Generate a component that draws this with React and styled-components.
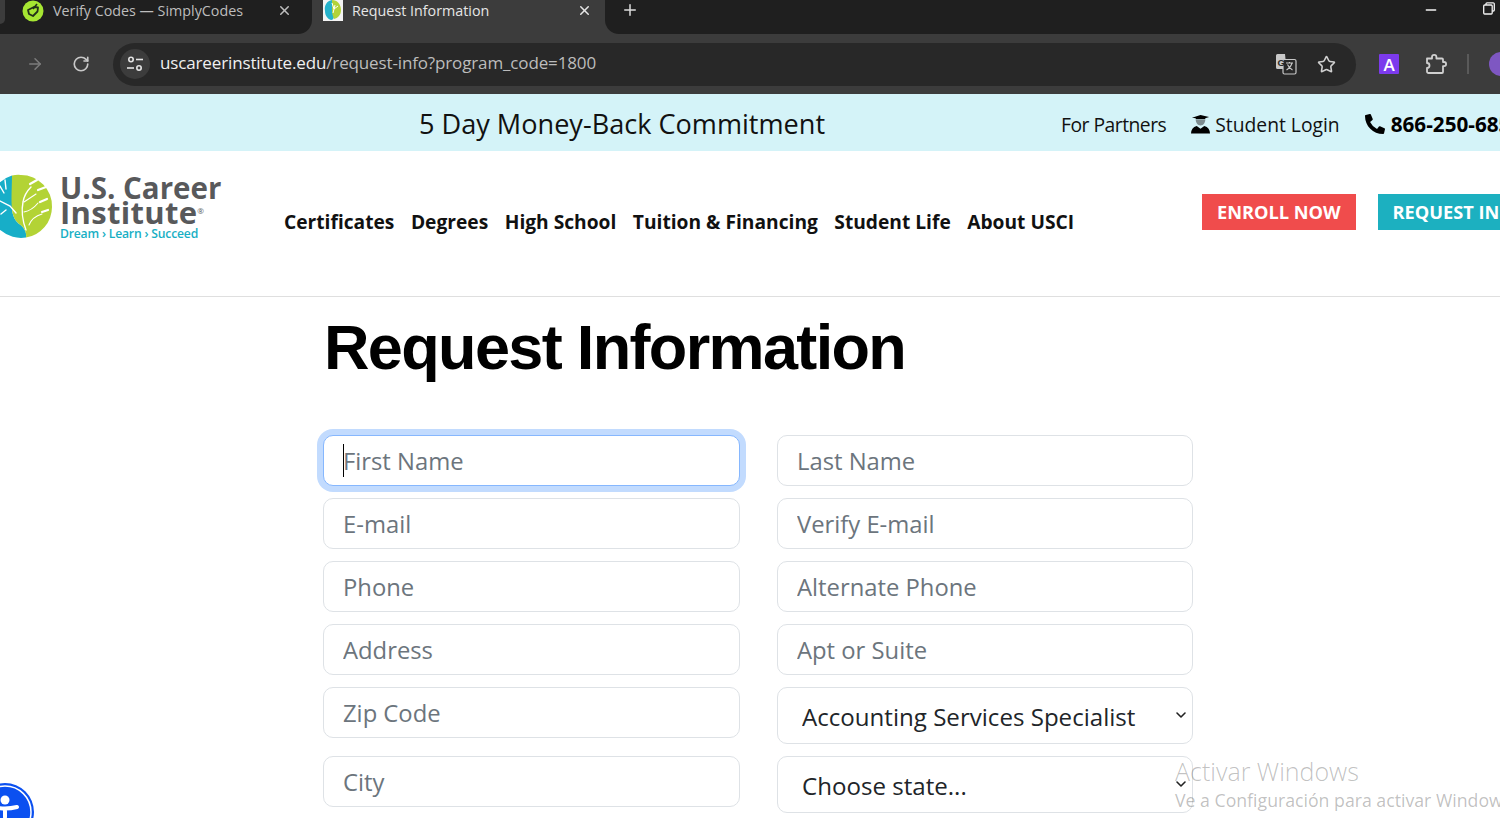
import styled, { createGlobalStyle } from 'styled-components';
import { ArrowRight, ChevronDown, RotateCw, Star, X, Plus, Minus } from 'lucide-react';
import { FaPhoneAlt } from 'react-icons/fa';

const GlobalStyle = createGlobalStyle`
  html, body {
    margin: 0;
    padding: 0;
    height: 818px;
    overflow: hidden;
    background: #fff;
    font-family: 'Open Sans', 'Noto Sans', sans-serif;
  }
  * { box-sizing: border-box; }
`;

const Page = styled.div`
  position: relative;
  width: 1500px;
  height: 818px;
  overflow: hidden;
`;

/* browser chrome */
const TabStrip = styled.div`
  display: flex;
  height: 34px;
  background: #3c3c3c;
  color: #fff;
`;

const DarkBlock = styled.div`
  display: flex;
  align-items: flex-start;
  background: #1f1f1f;
  flex: ${(p) => (p.$grow ? '1' : '0 0 312px')};
  border-radius: ${(p) => (p.$grow ? '0 0 0 14px' : '0 0 14px 0')};
`;

const TabStub = styled.div`
  flex: 0 0 5px;
  height: 24px;
  background: #3c3c3c;
  border-radius: 0 0 8px 0;
`;

const Tab = styled.div`
  display: flex;
  align-items: center;
  height: 21px;
  font-size: 14.3px;
  color: ${(p) => (p.$active ? '#e6e6e6' : '#bdbdbd')};
  flex: ${(p) => (p.$active ? '0 0 293px' : '1')};
  padding: ${(p) => (p.$active ? '0 13px 0 11px' : '0 20px 0 17px')};
`;

const TabTitle = styled.span`
  margin-left: 9px;
  flex: 1;
  white-space: nowrap;
`;

const WindowButtons = styled.div`
  display: flex;
  margin-left: auto;
  align-items: flex-start;
  gap: 44px;
  padding: 2px 5px 0 0;
  color: #f2f2f2;
`;

const NewTab = styled.div`
  display: flex;
  align-items: center;
  height: 20px;
  padding-left: 16px;
  color: #ddd;
`;

const Toolbar = styled.div`
  display: flex;
  align-items: center;
  height: 60px;
  background: #3c3c3c;
  padding-left: 26px;
`;

const NavButton = styled.div`
  display: flex;
  flex: none;
  width: 18px;
  margin-left: ${(p) => p.$ml || 0}px;
  color: ${(p) => (p.$dim ? '#7c7c7c' : '#c8c8c8')};
`;

const Omnibox = styled.div`
  display: flex;
  flex: none;
  align-items: center;
  width: 1243px;
  height: 43px;
  margin-left: 23px;
  border-radius: 22px;
  background: #282828;
  padding: 0 20px 0 7px;
`;

const SiteInfo = styled.div`
  display: flex;
  align-items: center;
  justify-content: center;
  width: 30px;
  height: 30px;
  border-radius: 50%;
  background: #3c3c3c;
  margin-right: 10px;
`;

const Url = styled.div`
  flex: 1;
  padding-bottom: 3px;
  font-size: 17px;
  letter-spacing: -0.14px;
  color: #bcbcbc;
  white-space: nowrap;
  & b {
    font-weight: 400;
    color: #f0f0f0;
  }
`;

const OmniActions = styled.div`
  display: flex;
  align-items: center;
  gap: 20px;
  color: #d0d0d0;
`;

const ExtBadge = styled.div`
  display: flex;
  flex: none;
  align-items: center;
  justify-content: center;
  width: 20px;
  height: 20px;
  margin-left: 23px;
  background: #7c3aed;
  color: #fff;
  font-size: 17px;
  font-weight: 600;
  border-radius: 1px;
`;

const PuzzleWrap = styled.div`
  display: flex;
  flex: none;
  margin-left: 26px;
  color: #d0d0d0;
`;

const Divider = styled.div`
  flex: none;
  width: 2px;
  height: 20px;
  margin-left: 20px;
  background: #5a5a5a;
`;

const Avatar = styled.div`
  width: 24px;
  height: 24px;
  flex: none;
  margin-left: 20px;
  border-radius: 50%;
  background: #7e57c2;
`;

/* site top bar */
const TopBar = styled.div`
  display: flex;
  align-items: center;
  height: 57px;
  padding-top: 2px;
  background: #d4f3f8;
  color: #111;
  white-space: nowrap;
`;

const Commitment = styled.div`
  flex: none;
  margin-left: 419px;
  font-size: 27.1px;
  width: 642px;
`;

const TopLink = styled.div`
  display: flex;
  flex: none;
  align-items: center;
  gap: ${(p) => (p.$bold ? 6 : 5)}px;
  font-size: ${(p) => (p.$bold ? 20.7 : 19.3)}px;
  font-weight: ${(p) => (p.$bold ? 700 : 400)};
  letter-spacing: ${(p) => (p.$tight ? '-0.5px' : '0')};
  margin-right: 25px;
  padding-top: 1px;
  color: ${(p) => (p.$bold ? '#000' : '#111')};
`;

/* site header */
const Header = styled.header`
  display: flex;
  height: 146px;
  border-bottom: 1px solid #dfdfdf;
  white-space: nowrap;
`;

const Logo = styled.div`
  display: flex;
  flex: 0 0 284px;
  padding-top: 21px;
`;

const LogoMark = styled.svg`
  flex: none;
  width: 60px;
  height: 68px;
`;

const LogoText = styled.div`
  display: flex;
  flex-direction: column;
  margin-top: -1px;
  color: #58595b;
  font-weight: 700;
  line-height: 25px;
  padding-top: 4px;
`;

const LogoLine = styled.span`
  font-size: ${(p) => (p.$wide ? 31 : 29.5)}px;
  letter-spacing: ${(p) => (p.$wide ? '0.3px' : '0')};
  & sup {
    font-size: 8px;
    font-weight: 400;
    line-height: 0;
    vertical-align: 10px;
  }
`;

const Tagline = styled.div`
  font-size: 12.2px;
  line-height: 17px;
  font-weight: 600;
  color: #18afc4;
  letter-spacing: -0.2px;
`;

const MainNav = styled.nav`
  display: flex;
  gap: 16.5px;
  padding-top: 57px;
  font-size: 19.2px;
  font-weight: 700;
  color: #111;
  flex: 0 0 918px;
`;

const HeaderButtons = styled.div`
  display: flex;
  flex: none;
  gap: 22px;
  padding-top: 43px;
`;

const CtaButton = styled.div`
  height: 36px;
  padding: 0 15px;
  line-height: 36px;
  font-size: 18.2px;
  font-weight: 700;
  color: #fff;
  background: ${(p) => p.$bg};
`;

/* form */
const Main = styled.main`
  padding-left: 323px;
  width: 1193px;
`;

const Title = styled.h1`
  margin: 0;
  padding: 13px 0 0 1px;
  height: 138px;
  font-family: 'Liberation Sans', Arial, sans-serif;
  font-size: 63px;
  letter-spacing: -1.65px;
  line-height: 74px;
  font-weight: 700;
  color: #000;
  white-space: nowrap;
`;

const FormGrid = styled.form`
  display: grid;
  grid-template-columns: 417px 416px;
  column-gap: 37px;
  row-gap: 12px;
  align-items: start;
`;

const Field = styled.div`
  position: relative;
`;

const Input = styled.input`
  display: block;
  width: 100%;
  height: 51px;
  padding: 1px 19px 0;
  font-family: inherit;
  font-size: 23.8px;
  color: #212529;
  background: #fff;
  border: 1px solid ${(p) => (p.$focused ? '#86b7fe' : '#dee2e6')};
  border-radius: 10px;
  outline: none;
  box-shadow: ${(p) => (p.$focused ? '0 0 0 6px #c2dbfe' : 'none')};
  &::placeholder {
    color: #6c757d;
    opacity: 1;
  }
`;

const Caret = styled.span`
  position: absolute;
  left: 20px;
  top: 9px;
  width: 1px;
  height: 33px;
  background: #000;
`;

const Select = styled.select`
  display: block;
  width: 100%;
  height: 57px;
  padding: 1px 32px 0 24px;
  font-family: inherit;
  font-size: 24.1px;
  color: #212529;
  background: #fff;
  border: 1px solid #dee2e6;
  border-radius: 10px;
  outline: none;
  appearance: none;
`;

const SelectChevron = styled(ChevronDown)`
  position: absolute;
  right: 4px;
  top: 20px;
  color: #222;
  pointer-events: none;
`;

/* overlays */
const A11yButton = styled.div`
  position: absolute;
  left: -24px;
  top: 783px;
  width: 58px;
  height: 58px;
  color: #fff;
`;

const Watermark = styled.div`
  position: absolute;
  left: 1175px;
  top: 753px;
  color: rgba(60, 60, 60, 0.32);
  white-space: nowrap;
  pointer-events: none;
  font-size: 17.7px;
  line-height: 23px;
`;

const WatermarkTitle = styled.div`
  font-size: 25px;
  line-height: 36px;
  font-weight: 300;
`;

const SimplyIcon = () => (
  <svg width='22' height='22' viewBox='0 0 22 22' style={{ flex: 'none' }}>
    <circle cx='11' cy='11' r='10.5' fill='#a6e632' />
    <path d='M6 10l6-3 4 .5-.5 4-4.5 4.5-4-2z' fill='none' stroke='#23301a' strokeWidth='1.8' strokeLinejoin='round' />
    <path d='M15 4l-4 5' stroke='#23301a' strokeWidth='1.6' />
  </svg>
);

const UsciIcon = () => (
  <svg width='20' height='21' viewBox='0 0 20 21' style={{ flex: 'none' }}>
    <rect width='20' height='21' fill='#f4f4f4' />
    <path d='M9 0C4 1 1 5 2 11c0 5 3 8 6 9 2 0 3-2 3-4z' fill='#25b2cb' />
    <path d='M9 0c5 0 9 4 9 10 0 5-3 8-7 9-1-3-2-5-2-8z' fill='#b2d33a' />
    <path d='M9 3l2 6-1 4M12 5l-1 4 4-3' stroke='#fff' strokeWidth='1' fill='none' />
  </svg>
);

const TuneIcon = () => (
  <svg width='18' height='18' viewBox='0 0 18 18' fill='none' stroke='#e4e4e4' strokeWidth='1.6'>
    <circle cx='5' cy='4.5' r='2.2' />
    <path d='M10 4.5h7' />
    <circle cx='13' cy='13' r='2.2' />
    <path d='M1 13h7' />
  </svg>
);

const TranslateIcon = () => (
  <svg width='22' height='22' viewBox='0 0 22 22'>
    <path d='M1 2.5A1.5 1.5 0 0 1 2.5 1H10l1.500 15H2.500A1.500 1.500 0 0 1 1 14.500z' fill='#c8c8c8' />
    <rect x='8' y='6.500' width='13' height='14.500' rx='1.500' fill='#282828' stroke='#c8c8c8' strokeWidth='1.200' />
    <text x='2.500' y='12.500' fontSize='9.500' fontWeight='700' fill='#282828' fontFamily='Liberation Sans'>G</text>
    <path d='M11 10h7M14.500 9v1M17 10c-.8 3-3 5.500-5.500 7M12.500 11.500c1 2.200 3 4.500 5 5.500' stroke='#c8c8c8' strokeWidth='1.100' fill='none' />
  </svg>
);

const PuzzleIcon = () => (
  <svg width='22' height='22' viewBox='0 0 22 22' fill='none' stroke='currentColor' strokeWidth='1.8' strokeLinejoin='round'>
    <path d='M2 5.500h5V4a2.200 2.200 0 0 1 4.400 0v1.500H17a1 1 0 0 1 1 1V9h1a2 2 0 0 1 0 4.200h-1V19a1 1 0 0 1-1 1H3.500A1.500 1.500 0 0 1 2 18.500v-3.500a2.500 2.500 0 0 0 0-5z' />
  </svg>
);

const RestoreIcon = () => (
  <svg width='12' height='13' viewBox='0 0 12 13' fill='none' stroke='currentColor' strokeWidth='1.3'>
    <rect x='.7' y='3' width='8.500' height='9' rx='1' />
    <path d='M3 3V1.800A1 1 0 0 1 4 .8h6a1.200 1.200 0 0 1 1.300 1.200v6a1 1 0 0 1-1 1H9.200' />
  </svg>
);

const StudentIcon = () => (
  <svg width='19' height='21' viewBox='0 0 20 21' style={{ flex: 'none' }}>
    <path d='M1 3.500L10 .5l9 2-4 1.500v1H5V4z' fill='#000' />
    <path d='M5 5.500h10c0 3-2 6-5 6s-5-3-5-6z' fill='#7d8c90' />
    <path d='M0 20c0-4 2-7 6-8l4 3 4-3c4 1 6 4 6 8z' fill='#000' />
  </svg>
);

const LogoTree = () => (
  <LogoMark viewBox='0 0 60 68'>
    <path d='M12 3.500A31 31 0 0 0-10 35a31 31 0 0 0 36 30.500c1-5-2-10-6-13-3-2-7-6-8-15z' fill='#17aec8' />
    <path d='M12 3.500a31 31 0 0 1 9-.5 31 31 0 0 1 31 32 31 31 0 0 1-26 30.500c1-5-2-10-6-13-3-2-7-6-8-15-1-10 0-25 0-34.500z' fill='#b3d335' />
    <g fill='none' stroke='#fff' strokeLinecap='round'>
      <path d='M26 58c-3-8-5-18-3-28 1-6 4-11 8-15' strokeWidth='1.400' />
      <path d='M24 30l12-8M24 40c5-1 10-4 14-9M29 53c2-5 6-9 13-11' strokeWidth='1.100' />
      <path d='M30 12l7-4M38 18l8-3M40 30l7-3M42 40l6-2' strokeWidth='2.200' />
      <path d='M0 14l4 7M-2 28l12 6 6 7M6 38l-5 4M5 8l1 9' strokeWidth='1.400' />
    </g>
  </LogoMark>
);

const A11yIcon = () => (
  <svg width='58' height='58' viewBox='0 0 58 58'>
    <circle cx='29' cy='29' r='29' fill='#0b50f0' />
    <circle cx='29' cy='29' r='26' fill='none' stroke='#fff' strokeWidth='1.500' />
    <circle cx='29' cy='17' r='4.500' fill='#fff' />
    <path d='M17 24c8 2 16 2 24 0M29 26v8' stroke='#fff' strokeWidth='4' strokeLinecap='round' />
  </svg>
);

const App = () => {
  return (
    <Page>
      <GlobalStyle />
      <TabStrip>
        <DarkBlock>
          <TabStub />
          <Tab>
            <SimplyIcon />
            <TabTitle>Verify Codes — SimplyCodes</TabTitle>
            <X size={15} strokeWidth={2.4} />
          </Tab>
        </DarkBlock>
        <Tab $active>
          <UsciIcon />
          <TabTitle>Request Information</TabTitle>
          <X size={15} strokeWidth={2.4} />
        </Tab>
        <DarkBlock $grow>
          <NewTab>
            <Plus size={18} strokeWidth={2} />
          </NewTab>
          <WindowButtons>
            <Minus size={16} strokeWidth={2.2} />
            <RestoreIcon />
          </WindowButtons>
        </DarkBlock>
      </TabStrip>

      <Toolbar>
        <NavButton $dim>
          <ArrowRight size={18} />
        </NavButton>
        <NavButton $ml={28}>
          <RotateCw size={18} strokeWidth={2.2} />
        </NavButton>
        <Omnibox>
          <SiteInfo>
            <TuneIcon />
          </SiteInfo>
          <Url>
            <b>uscareerinstitute.edu</b>/request-info?program_code=1800
          </Url>
          <OmniActions>
            <TranslateIcon />
            <Star size={19} strokeWidth={2} />
          </OmniActions>
        </Omnibox>
        <ExtBadge>A</ExtBadge>
        <PuzzleWrap>
          <PuzzleIcon />
        </PuzzleWrap>
        <Divider />
        <Avatar />
      </Toolbar>

      <TopBar>
        <Commitment>5 Day Money-Back Commitment</Commitment>
        <TopLink $tight>For Partners</TopLink>
        <TopLink>
          <StudentIcon />
          Student Login
        </TopLink>
        <TopLink $bold>
          <FaPhoneAlt size={20} />
          866-250-6851
        </TopLink>
      </TopBar>

      <Header>
        <Logo>
          <LogoTree />
          <LogoText>
            <LogoLine>U.S. Career</LogoLine>
            <LogoLine $wide>
              Institute<sup>®</sup>
            </LogoLine>
            <Tagline>Dream › Learn › Succeed</Tagline>
          </LogoText>
        </Logo>
        <MainNav>
          <span>Certificates</span>
          <span>Degrees</span>
          <span>High School</span>
          <span>Tuition &amp; Financing</span>
          <span>Student Life</span>
          <span>About USCI</span>
        </MainNav>
        <HeaderButtons>
          <CtaButton $bg='#f04c4c'>ENROLL NOW</CtaButton>
          <CtaButton $bg='#1cb0c0'>REQUEST INFO</CtaButton>
        </HeaderButtons>
      </Header>

      <Main>
        <Title>Request Information</Title>
        <FormGrid>
          <Field>
            <Input $focused placeholder='First Name' readOnly />
            <Caret />
          </Field>
          <Input placeholder='Last Name' readOnly />
          <Input placeholder='E-mail' readOnly />
          <Input placeholder='Verify E-mail' readOnly />
          <Input placeholder='Phone' readOnly />
          <Input placeholder='Alternate Phone' readOnly />
          <Input placeholder='Address' readOnly />
          <Input placeholder='Apt or Suite' readOnly />
          <Input placeholder='Zip Code' readOnly />
          <Field>
            <Select defaultValue='acc'>
              <option value='acc'>Accounting Services Specialist</option>
            </Select>
            <SelectChevron size={16} strokeWidth={2.4} />
          </Field>
          <Input placeholder='City' readOnly />
          <Field>
            <Select defaultValue=''>
              <option value=''>Choose state...</option>
            </Select>
            <SelectChevron size={16} strokeWidth={2.4} />
          </Field>
        </FormGrid>
      </Main>

      <A11yButton>
        <A11yIcon />
      </A11yButton>
      <Watermark>
        <WatermarkTitle>Activar Windows</WatermarkTitle>
        Ve a Configuración para activar Windows.
      </Watermark>
    </Page>
  );
};

export default App;
